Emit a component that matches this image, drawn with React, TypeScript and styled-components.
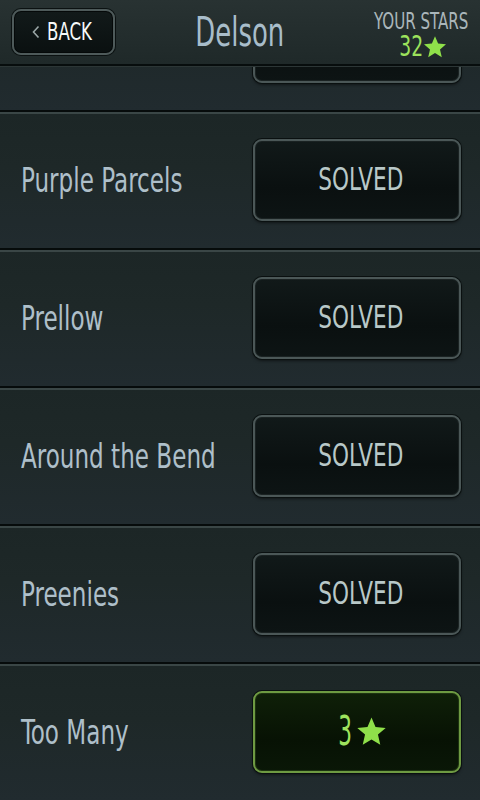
import React from 'react'
import styled, { createGlobalStyle } from 'styled-components'

const GlobalStyle = createGlobalStyle`
  html, body {
    margin: 0;
    padding: 0;
    background: #1d2727;
  }
  body {
    font-family: 'DejaVu Sans Condensed', 'DejaVu Sans', sans-serif;
    font-stretch: condensed;
  }
`

// the game font is a narrow DIN, squeeze DejaVu Condensed to fit
const Cond = styled.span<{ $sx?: number; $origin?: string }>`
  display: inline-block;
  white-space: nowrap;
  transform: scaleX(${(p) => p.$sx ?? 0.74});
  transform-origin: ${(p) => p.$origin ?? 'center'};
`

const Screen = styled.div`
  width: 480px;
  height: 800px;
  position: relative;
  overflow: hidden;
  background: #1d2727;
`

const Header = styled.div`
  position: absolute;
  top: 0;
  left: 0;
  right: 0;
  height: 66px;
  z-index: 2;
  display: grid;
  grid-template-columns: 1fr auto 1fr;
  align-items: center;
  padding: 0 12px;
  box-sizing: border-box;
  background: linear-gradient(#283232, #1f2929);
  border-bottom: 2px solid #070d0d;
  box-shadow: 0 1px 0 #2c3636;
`

const BackButton = styled.button`
  justify-self: start;
  width: 103px;
  height: 46px;
  display: flex;
  align-items: center;
  box-sizing: border-box;
  border: 2px solid #4e5a5a;
  border-radius: 9px;
  background: linear-gradient(#121a1a, #0a1010);
  box-shadow: 0 0 0 1px #0b1111, inset 0 0 0 1px #050909;
  color: #f6fafa;
  font-family: inherit;
  font-size: 24px;
  line-height: 1;
  padding: 0 0 1px 18px;
  cursor: pointer;
`

const Chevron = styled.svg`
  width: 8px;
  height: 14px;
  margin-right: 7px;
`

const Title = styled.div`
  font-size: 40px;
  line-height: 1;
  color: #a8bdca;
`

const Stars = styled.div`
  justify-self: end;
  align-self: start;
  margin-top: 10px;
  display: flex;
  flex-direction: column;
  align-items: flex-end;
  line-height: 1;
`

const StarsLabel = styled.div`
  font-size: 23px;
  color: #aab6ba;
`

const StarsCount = styled.div`
  display: flex;
  align-items: center;
  font-size: 29px;
  color: #9ce25c;
  margin: -1px 21px 0 0;
`

const List = styled.div`
  margin-top: -28px;
  display: flex;
  flex-direction: column;
`

const Row = styled.div`
  height: 138px;
  box-sizing: border-box;
  display: flex;
  align-items: center;
  justify-content: space-between;
  padding: 0 19px 0 21px;
  border-top: 2px solid #060b0b;
  background:
    linear-gradient(#3a4646, #3a4646) top / 100% 2px no-repeat,
    linear-gradient(#1c2626, #1e2828 40%, #212b2f);
`

const Name = styled.div`
  flex: 1;
  min-width: 0;
  font-size: 34px;
  line-height: 1;
  color: #aebfc9;
`

const Action = styled.div<{ $active?: boolean }>`
  flex: none;
  width: 208px;
  height: 82px;
  box-sizing: border-box;
  display: flex;
  align-items: center;
  justify-content: center;
  border-radius: 9px;
  border: 2px solid ${(p) => (p.$active ? '#6e9a42' : '#4b5757')};
  background: ${(p) =>
    p.$active
      ? 'linear-gradient(#0f2008, #071204 60%, #0a1707)'
      : 'linear-gradient(#111919, #0a1010 60%, #0d1414)'};
  box-shadow: 0 0 0 1px #0a1010, 0 2px 3px rgba(0, 0, 0, 0.5),
    inset 0 0 0 1px ${(p) => (p.$active ? '#1d3310' : '#1a2222')};
  color: ${(p) => (p.$active ? '#9ee25e' : '#b8c8c8')};
  font-size: ${(p) => (p.$active ? 40 : 32)}px;
  line-height: 1;
  padding: 0 0 2px ${(p) => (p.$active ? 2 : 7)}px;
`

const Gap = styled.span`
  width: 4px;
`

const StarGlyph = styled.svg<{ $size: number }>`
  width: ${(p) => p.$size}px;
  height: ${(p) => p.$size}px;
  flex: none;
`

const Star = ({ size }: { size: number }) => (
  <StarGlyph $size={size} viewBox='0 0 24 24'>
    <path
      d='M12 1.2l3.1 7.3 7.9.7-6 5.2 1.8 7.8L12 18.1l-6.8 4.1 1.8-7.8-6-5.2 7.9-.7z'
      fill='#8fe04a'
    />
  </StarGlyph>
)

const levels = [
  { name: '', solved: true },
  { name: 'Purple Parcels', solved: true },
  { name: 'Prellow', solved: true },
  { name: 'Around the Bend', solved: true },
  { name: 'Preenies', solved: true },
  { name: 'Too Many', solved: false, stars: 3 },
]

export default function App() {
  return (
    <Screen>
      <GlobalStyle />
      <Header>
        <BackButton>
          <Chevron viewBox='0 0 8 14'>
            <path d='M6.5 1.5L1.5 7l5 5.5' stroke='#9aa6a6' strokeWidth='1.6' fill='none' />
          </Chevron>
          <Cond $sx={0.77} $origin='left'>
            BACK
          </Cond>
        </BackButton>
        <Title>
          <Cond $sx={0.72}>Delson</Cond>
        </Title>
        <Stars>
          <StarsLabel>
            <Cond $sx={0.73} $origin='right'>
              YOUR STARS
            </Cond>
          </StarsLabel>
          <StarsCount>
            <Cond $sx={0.72} $origin='right'>
              32
            </Cond>
            <Star size={24} />
          </StarsCount>
        </Stars>
      </Header>
      <List>
        {levels.map((l, i) => (
          <Row key={i}>
            <Name>
              <Cond $sx={0.755} $origin='left'>
                {l.name}
              </Cond>
            </Name>
            {l.solved ? (
              <Action>
                <Cond $sx={0.75}>SOLVED</Cond>
              </Action>
            ) : (
              <Action $active>
                <Cond $sx={0.6} $origin='right'>
                  {l.stars}
                </Cond>
                <Gap />
                <Star size={31} />
              </Action>
            )}
          </Row>
        ))}
      </List>
    </Screen>
  )
}
